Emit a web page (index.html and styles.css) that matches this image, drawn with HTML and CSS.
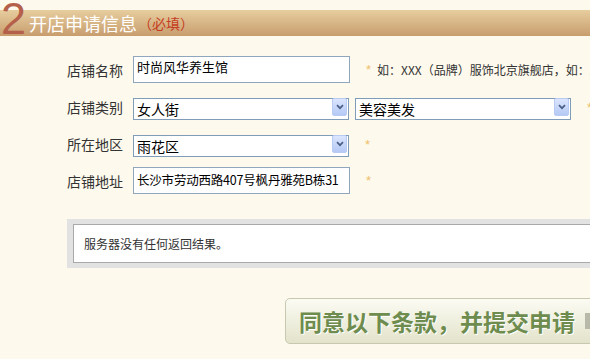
FILE: index.html
```html
<!DOCTYPE html>
<html lang="zh-CN">
<head>
    <meta charset="UTF-8">
    <title>开店申请信息</title>
    <link rel="stylesheet" href="styles.css">
</head>
<body>
    <div class="title">
        <span class="num">2</span>
        <h2>开店申请信息</h2>
        <span class="must">（必填）</span>
    </div>

    <div class="form">
        <div class="row">
            <label>店铺名称</label>
            <input class="txt txt-name" type="text" value="时尚风华养生馆">
            <span class="star">*</span>
            <span class="hint">如：XXX（品牌）服饰北京旗舰店，如：XXX专卖店</span>
        </div>
        <div class="row row-type">
            <label>店铺类别</label>
            <div class="sel">
                <select><option>女人街</option></select>
                <span class="arrow"><svg width="8" height="6" viewBox="0 0 8 6"><path d="M1 1.2 L4 4.2 L7 1.2" fill="none" stroke="#4a5f86" stroke-width="1.7"/></svg></span>
            </div>
            <div class="sel sel-second">
                <select><option>美容美发</option></select>
                <span class="arrow"><svg width="8" height="6" viewBox="0 0 8 6"><path d="M1 1.2 L4 4.2 L7 1.2" fill="none" stroke="#4a5f86" stroke-width="1.7"/></svg></span>
            </div>
            <span class="star">*</span>
        </div>
        <div class="row row-area">
            <label>所在地区</label>
            <div class="sel">
                <select><option>雨花区</option></select>
                <span class="arrow"><svg width="8" height="6" viewBox="0 0 8 6"><path d="M1 1.2 L4 4.2 L7 1.2" fill="none" stroke="#4a5f86" stroke-width="1.7"/></svg></span>
            </div>
            <span class="star">*</span>
        </div>
        <div class="row row-addr">
            <label>店铺地址</label>
            <input class="txt txt-addr" type="text" value="长沙市劳动西路407号枫丹雅苑B栋31">
            <span class="star">*</span>
        </div>
    </div>

    <div class="msg">
        <div class="msg-inner">服务器没有任何返回结果。</div>
    </div>

    <button class="submit">同意以下条款，并提交申请<span class="go"></span></button>
</body>
</html>
```

FILE: styles.css
```css
html, body {
    overflow: hidden;
}
body {
    margin: 0;
    background: #fdf9ec;
    font-family: "Noto Sans CJK SC", "Liberation Sans", sans-serif;
    color: #333;
}

.title {
    display: flex;
    align-items: flex-start;
    height: 26px;
    margin-top: 10px;
    padding-left: 1px;
    background: linear-gradient(#e7cd9e, #c89d6e);
    white-space: nowrap;
}
.num {
    font-family: "Liberation Sans", Arial, sans-serif;
    font-size: 45px;
    line-height: 26px;
    margin-top: -4px;
    color: #b5604a;
}
.title h2 {
    align-self: center;
    margin: 0 0 0 3px;
    font-size: 18px;
    font-weight: normal;
    line-height: 26px;
    color: #fff;
}
.must {
    align-self: center;
    margin-left: 1px;
    font-size: 14px;
    color: #c63d1f;
}

.form {
    margin-top: 20px;
    padding-left: 67px;
}
.row {
    display: flex;
    align-items: center;
    white-space: nowrap;
}
.row label {
    flex-shrink: 0;
    width: 56px;
    margin-right: 10px;
    font-size: 14px;
    color: #333;
}
.row-type {
    margin-top: 13px;
}
.row-area {
    margin-top: 15px;
}
.row-addr {
    margin-top: 12px;
}

.txt {
    flex-shrink: 0;
    box-sizing: border-box;
    width: 217px;
    height: 27px;
    border: 1px solid #8fa6bd;
    background: #fff;
    font-family: "Noto Sans CJK SC", sans-serif;
    font-size: 13px;
    color: #000;
    outline: none;
}
.txt-name {
    padding: 1px 3px 8px;
    line-height: 15px;
}
.txt-addr {
    padding: 0 2px 3px 3px;
    font-size: 12.5px;
    letter-spacing: -0.2px;
}

.sel {
    flex-shrink: 0;
    position: relative;
    width: 216px;
    height: 22px;
}
.sel-second {
    margin-left: 6px;
}
.sel select {
    box-sizing: border-box;
    width: 100%;
    height: 100%;
    -webkit-appearance: none;
    appearance: none;
    border: 1px solid #7f9db9;
    border-radius: 0;
    background: #fff;
    padding: 0 20px 0 3px;
    font-family: "Noto Sans CJK SC", sans-serif;
    font-size: 14px;
    color: #000;
    outline: none;
}
.sel .arrow {
    position: absolute;
    top: 2px;
    right: 2px;
    bottom: 2px;
    width: 13px;
    border: 1px solid #b9cbf2;
    border-radius: 2px;
    background: linear-gradient(#dbe5fd, #b5c9f5);
    display: flex;
    align-items: center;
    justify-content: center;
    pointer-events: none;
}

.star {
    flex-shrink: 0;
    margin-left: 16px;
    font-family: "Liberation Sans", sans-serif;
    font-size: 13px;
    color: #efbf6a;
}
.hint {
    margin-left: 6px;
    font-size: 12px;
    color: #333;
}

.msg {
    width: 540px;
    margin: 25px 0 0 67px;
    padding: 5px 6px;
    background: #e2e2e2;
}
.msg-inner {
    display: flex;
    align-items: center;
    height: 37px;
    padding-left: 10px;
    border: 1px solid #a9a9a9;
    background: #fff;
    font-size: 12px;
    color: #333;
}

.submit {
    display: flex;
    align-items: center;
    width: 330px;
    height: 46px;
    margin: 30px 0 0 285px;
    padding: 0 0 0 13px;
    border: 1px solid #c8c8b0;
    border-radius: 5px;
    background: linear-gradient(#fbfbf3, #e3e3cb);
    font-family: "Noto Sans CJK SC", sans-serif;
    font-size: 23px;
    font-weight: bold;
    color: #6d8c4d;
    text-shadow: 1px 1px 0 #fff;
    white-space: nowrap;
    cursor: pointer;
}
.go {
    display: inline-block;
    width: 8px;
    height: 16px;
    margin-left: 10px;
    background: #b9b9a9;
}
```
